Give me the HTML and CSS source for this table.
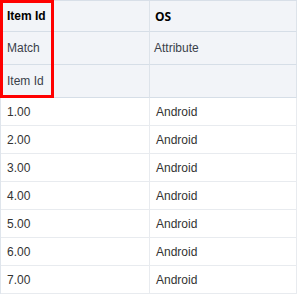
FILE: index.html
```html
<!DOCTYPE html>
<html>
<head>
<meta charset="utf-8">
<link rel="stylesheet" href="styles.css">
</head>
<body>
<div class="wrap">
  <div class="grid">
    <div class="cell head r1 bold">Item Id</div>
    <div class="cell head r1 os">OS</div>
    <div class="cell head r2 sub">Match</div>
    <div class="cell head r2 sub attr">Attribute</div>
    <div class="cell head r2 sub">Item Id</div>
    <div class="cell head r2 sub"></div>

    <div class="cell">1.00</div><div class="cell val">Android</div>
    <div class="cell">2.00</div><div class="cell val">Android</div>
    <div class="cell">3.00</div><div class="cell val">Android</div>
    <div class="cell">4.00</div><div class="cell val">Android</div>
    <div class="cell">5.00</div><div class="cell val">Android</div>
    <div class="cell">6.00</div><div class="cell val">Android</div>
    <div class="cell">7.00</div><div class="cell val">Android</div>
  </div>
  <div class="highlight"></div>
</div>
</body>
</html>
```

FILE: styles.css
```css
html, body {
  margin: 0;
  padding: 0;
  background: #ffffff;
}
.wrap {
  position: relative;
  width: 297px;
  height: 294px;
}
.grid {
  display: grid;
  grid-template-columns: 149px 147px;
  border-left: 1px solid #dfe5ec;
  border-top: 1px solid #d8dfe8;
  font-family: "Liberation Sans", Arial, sans-serif;
  font-size: 12px;
  color: #333333;
}
.cell {
  box-sizing: border-box;
  height: 28px;
  display: flex;
  align-items: center;
  padding-left: 6px;
  border-right: 1px solid #e8ebef;
  border-bottom: 1px solid #e8ebef;
  white-space: nowrap;
}
.val {
  padding-left: 6px;
}
.head {
  background: #f2f4f8;
  border-right-color: #dde3ea;
  border-bottom-color: #d6dee7;
}
.r1 {
  height: 31px;
}
.r2 {
  height: 33px;
}
.bold {
  font-weight: bold;
  color: #000000;
}
.os {
  font-family: "Open Sans", sans-serif;
  font-weight: bold;
  color: #000000;
  padding-left: 5px;
}
.sub {
  color: #3a3f4a;
  font-size: 12px;
}
.attr {
  padding-left: 4px;
}
.highlight {
  position: absolute;
  left: 0;
  top: 0;
  width: 54px;
  height: 98px;
  box-sizing: border-box;
  border: 3px solid #ff0000;
}
```
